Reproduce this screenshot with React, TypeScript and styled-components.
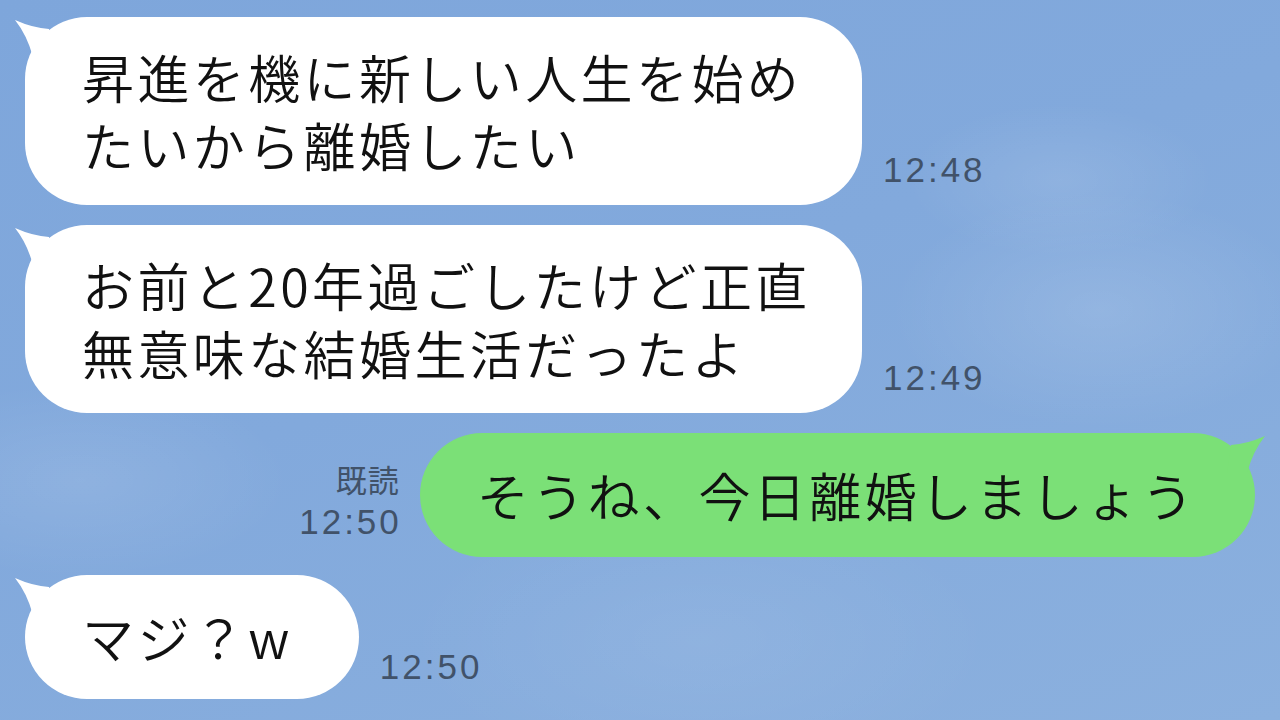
import React from "react";
import styled, { createGlobalStyle } from "styled-components";

const GlobalStyle = createGlobalStyle`
  html, body {
    margin: 0;
    padding: 0;
    width: 1280px;
    height: 720px;
    overflow: hidden;
  }
  #root {
    width: 1280px;
    height: 720px;
  }
`;

const Page = styled.div`
  width: 1280px;
  height: 720px;
  overflow: hidden;
  box-sizing: border-box;
  padding: 17px 25px 0;
  display: flex;
  flex-direction: column;
  gap: 20px;
  background:
    radial-gradient(ellipse 220px 110px at 1060px 180px, rgba(255, 255, 255, 0.1), transparent 70%),
    radial-gradient(ellipse 300px 170px at 1100px 310px, rgba(255, 255, 255, 0.12), transparent 70%),
    radial-gradient(ellipse 300px 140px at 80px 480px, rgba(255, 255, 255, 0.1), transparent 70%),
    radial-gradient(ellipse 420px 200px at 700px 640px, rgba(255, 255, 255, 0.07), transparent 70%),
    linear-gradient(160deg, #7ea6db 0%, #82a9dc 45%, #8bb0de 100%);
  font-family: "Noto Sans CJK JP", "Noto Sans", sans-serif;
`;

const Row = styled.div<{ $mine?: boolean; $lift?: number }>`
  display: flex;
  align-items: flex-end;
  justify-content: ${(p) => (p.$mine ? "flex-end" : "flex-start")};
  gap: 21px;
  margin-top: ${(p) => -(p.$lift ?? 0)}px;
`;

const Bubble = styled.div<{ $mine?: boolean; $single?: boolean; $extra?: number }>`
  position: relative;
  box-sizing: border-box;
  width: ${(p) => (p.$single ? "auto" : "837px")};
  padding: ${(p) =>
    p.$single ? `28px ${58 + (p.$extra ?? 0)}px 28px 57px` : "26px 30px 26px 57px"};
  border-radius: 62px;
  background: ${(p) => (p.$mine ? "#7be077" : "#ffffff")};
  color: #111;
  font-family: "Noto Sans CJK JP", sans-serif;
  font-weight: 350;
  font-size: 52px;
  line-height: 68px;
  letter-spacing: 3.4px;
  white-space: nowrap;
`;

const Tail = styled.svg<{ $mine?: boolean }>`
  position: absolute;
  top: 0;
  width: 40px;
  height: 44px;
  ${(p) => (p.$mine ? "right: -12px; transform: scaleX(-1);" : "left: -12px;")}
`;

const Meta = styled.div<{ $drop: number }>`
  display: flex;
  flex-direction: column;
  align-items: flex-end;
  margin-bottom: ${(p) => p.$drop}px;
  color: #415269;
`;

const Read = styled.span`
  font-family: "Noto Sans CJK JP", sans-serif;
  font-size: 31px;
  line-height: 34px;
  letter-spacing: 1px;
  margin-right: -1px;
  margin-bottom: 6px;
`;

const Time = styled.span`
  font-family: "Liberation Sans", Arial, sans-serif;
  font-size: 35px;
  line-height: 40px;
  letter-spacing: 3px;
  margin-right: -3px;
`;

const BubbleTail: React.FC<{ mine?: boolean; color: string }> = ({ mine, color }) => (
  <Tail $mine={mine} viewBox="0 0 40 44">
    <path d="M2 3 Q20 11 36 12 L40 40 L20 40 Q14 18 2 3 Z" fill={color} />
  </Tail>
);

type Message = {
  mine?: boolean;
  lines: string[];
  time: string;
  read?: boolean;
  drop: number;
  extra?: number;
  lift?: number;
};

const messages: Message[] = [
  { lines: ["昇進を機に新しい人生を始め", "たいから離婚したい"], time: "12:48", drop: 15 },
  { lines: ["お前と20年過ごしたけど正直", "無意味な結婚生活だったよ"], time: "12:49", drop: 15 },
  { mine: true, lines: ["そうね、今日離婚しましょう"], time: "12:50", read: true, drop: 15 },
  { lines: ["マジ？w"], time: "12:50", drop: 12, extra: 8, lift: 2 },
];

const App: React.FC = () => {
  return (
    <>
      <GlobalStyle />
      <Page>
        {messages.map((m, i) => {
          const meta = (
            <Meta $drop={m.drop}>
              {m.read && <Read>既読</Read>}
              <Time>{m.time}</Time>
            </Meta>
          );
          return (
            <Row key={i} $mine={m.mine} $lift={m.lift}>
              {m.mine && meta}
              <Bubble $mine={m.mine} $single={m.lines.length === 1} $extra={m.extra}>
                <BubbleTail mine={m.mine} color={m.mine ? "#7be077" : "#ffffff"} />
                {m.lines.map((l, j) => (
                  <div key={j}>{l}</div>
                ))}
              </Bubble>
              {!m.mine && meta}
            </Row>
          );
        })}
      </Page>
    </>
  );
};

export default App;
